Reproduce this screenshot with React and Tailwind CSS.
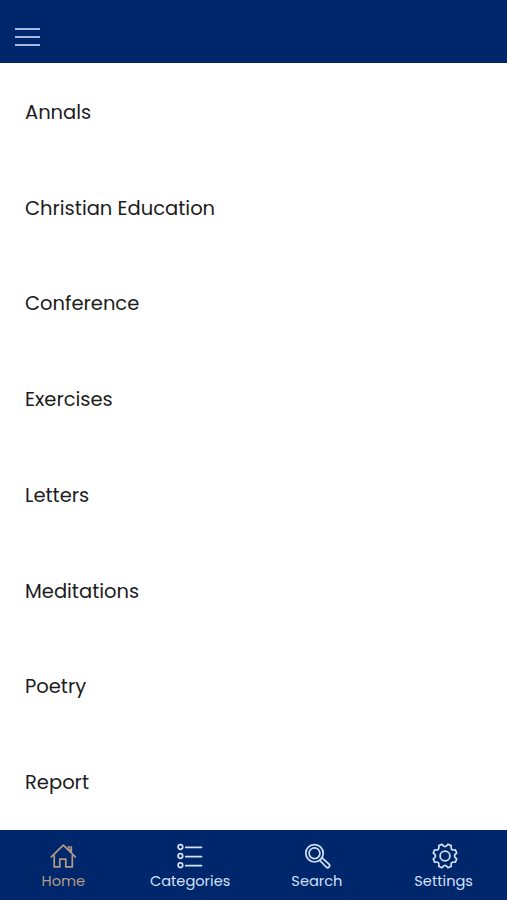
import React from 'react';
import clsx from 'clsx';

const categories = [
  'Annals',
  'Christian Education',
  'Conference',
  'Exercises',
  'Letters',
  'Meditations',
  'Poetry',
  'Report',
];

const Icon = ({ children, viewBox = '0 0 28 28' }) => (
  <svg
    width="28"
    height="28"
    viewBox={viewBox}
    fill="none"
    stroke="currentColor"
    strokeWidth="1.7"
    strokeLinecap="round"
    strokeLinejoin="round"
  >
    {children}
  </svg>
);

const HomeIcon = () => (
  <Icon viewBox="-0.3 -0.5 28 28">
    <path d="M2 14.3 14 2.7l12 11.6" />
    <path d="M4.9 13.2v11.2h5.6v-7.8h6v7.8H23V13.2" />
    <path d="M18.8 4.4h3.4v4.8z" strokeWidth="1.4" />
  </Icon>
);

const ListIcon = () => (
  <Icon viewBox="0 -0.4 28 28">
    <circle cx="4.4" cy="4.6" r="2.3" />
    <circle cx="4.4" cy="13.6" r="2.3" />
    <circle cx="4.4" cy="22.8" r="2.3" />
    <path d="M9.8 5h15.7M9.8 14.3h15.7M9.8 23.3h15.7" />
  </Icon>
);

const SearchIcon = () => (
  <Icon viewBox="-0.8 -0.3 28 28">
    <circle cx="10.7" cy="11" r="8.7" />
    <circle cx="10.7" cy="11" r="5.4" />
    <path d="m16 18 6.3 6.7a2 2 0 0 0 2.9-2.8l-7.1-6.5" />
  </Icon>
);

// eight rounded teeth around the centre, valleys on the axes and diagonals
const polar = (r, deg) => {
  const a = (deg * Math.PI) / 180;
  return `${(14 + r * Math.cos(a)).toFixed(2)} ${(14 + r * Math.sin(a)).toFixed(2)}`;
};

const gearPath =
  'M' +
  polar(12.1, -14) +
  [0, 45, 90, 135, 180, 225, 270, 315]
    .map((deg) => `Q${polar(7.2, deg)} ${polar(12.1, deg + 14)}L${polar(12.1, deg + 31)}`)
    .join('') +
  'z';

const GearIcon = () => (
  <Icon viewBox="-1 0 28 28">
    <circle cx="14" cy="14" r="4.9" />
    <path d={gearPath} />
  </Icon>
);

const tabs = [
  { name: 'Home', icon: HomeIcon, active: true },
  { name: 'Categories', icon: ListIcon },
  { name: 'Search', icon: SearchIcon },
  { name: 'Settings', icon: GearIcon },
];

const App = () => {
  return (
    <div className="flex h-[900px] w-full flex-col overflow-hidden bg-white font-['Poppins','Inter',sans-serif]">
      <header className="flex h-[63px] shrink-0 items-end bg-[#00276c] px-[15px] pb-[17px]">
        <button type="button" aria-label="Menu" className="flex w-[25px] flex-col gap-[6.5px]">
          <span className="h-[1.75px] w-full bg-[#a5b9e4]" />
          <span className="h-[1.75px] w-full bg-[#a5b9e4]" />
          <span className="h-[1.75px] w-full bg-[#a5b9e4]" />
        </button>
      </header>

      <ul className="flex flex-1 flex-col pt-px">
        {categories.map((name) => (
          <li key={name} className="flex flex-1 items-center px-[25px] pt-[2px]">
            <span className="text-[19.5px] leading-6 text-[#1c1c1c]">{name}</span>
          </li>
        ))}
      </ul>

      <nav className="flex h-[70px] shrink-0 bg-[#00276c]">
        {tabs.map(({ name, icon: TabIcon, active }) => (
          <button
            key={name}
            type="button"
            className={clsx(
              'flex flex-1 flex-col items-center pt-3',
              active ? 'text-[#b39b84]' : 'text-[#d3e1fa]'
            )}
          >
            <TabIcon />
            <span className="text-[14.6px] leading-[22px]">{name}</span>
          </button>
        ))}
      </nav>
    </div>
  );
};

export default App;
